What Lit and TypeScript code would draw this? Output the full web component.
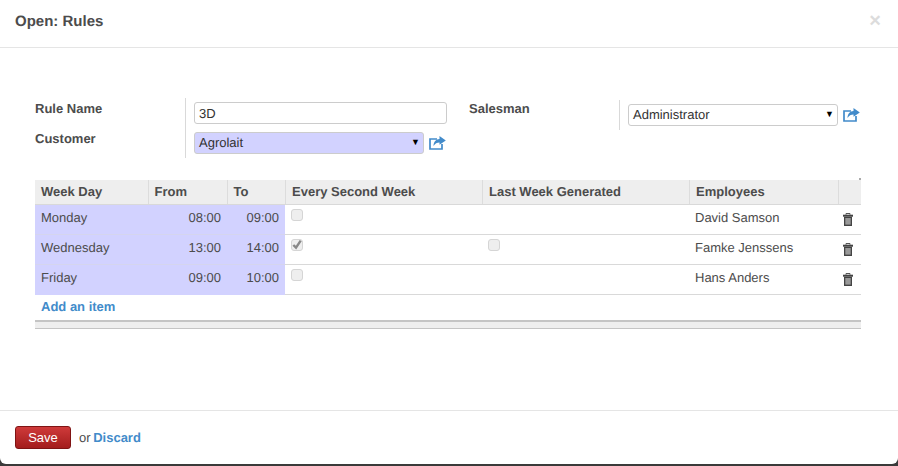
import { LitElement, html, css, svg } from "lit";
import { customElement } from "lit/decorators.js";
import { classMap } from "lit/directives/class-map.js";

const rows = [
  { day: "Monday", from: "08:00", to: "09:00", second: false, generated: false, employee: "David Samson" },
  { day: "Wednesday", from: "13:00", to: "14:00", second: true, generated: true, employee: "Famke Jenssens" },
  { day: "Friday", from: "09:00", to: "10:00", second: false, generated: false, employee: "Hans Anders" },
];

const externalIcon = svg`<svg class="ext" width="17" height="14" viewBox="0 0 17 14">
  <path d="M8 3H1V13H13V8" fill="none" stroke="#428bca" stroke-width="1.7"/>
  <path d="M10.5 0L16.8 4.4L10.5 8.8V6.4C8 6.4 6 7.4 4.5 10C4.5 6 7 3 10.5 3Z" fill="#428bca"/>
</svg>`;

const trashIcon = svg`<svg width="10" height="13" viewBox="0 0 10 13">
  <path d="M3 1.7V0.5H7V1.7" fill="none" stroke="#555" stroke-width="1"/>
  <rect x="0" y="1.7" width="10" height="2" fill="#444"/>
  <rect x="1" y="3.7" width="8" height="9.3" fill="#444"/>
  <rect x="2.3" y="5" width="5.4" height="6.6" fill="#999"/>
</svg>`;

@customElement("app-root")
export class AppRoot extends LitElement {
  static override styles = css`
    :host {
      display: block;
      height: 466px;
      background: #3a3a3a;
      font-family: "Liberation Sans", Arial, sans-serif;
      font-size: 13px;
      color: #4c4c4c;
      text-rendering: geometricPrecision;
    }
    .modal {
      height: 464px;
      background: #fff;
      border-radius: 0 0 6px 6px;
      display: flex;
      flex-direction: column;
      overflow: hidden;
    }
    .head {
      height: 47px;
      border-bottom: 1px solid #e5e5e5;
      display: flex;
      align-items: center;
      justify-content: space-between;
      padding: 0 15px;
    }
    .head h3 {
      margin: 0;
      font-size: 15px;
      font-weight: bold;
      position: relative;
      top: -2px;
    }
    .close {
      color: #dcdcdc;
      font-size: 20px;
      font-weight: bold;
      line-height: 20px;
      position: relative;
      top: -3px;
      left: -2px;
    }
    .body {
      flex: 1;
      padding: 50px 37px 0 35px;
    }
    .form {
      display: grid;
      grid-template-columns: 150px 284px 150px 1fr;
      align-items: start;
      width: 826px;
      height: 60px;
    }
    .labels {
      display: flex;
      flex-direction: column;
      font-weight: bold;
      padding-top: 3px;
      gap: 15px;
    }
    .labels span {
      height: 15px;
      line-height: 15px;
    }
    .fields {
      box-sizing: border-box;
      height: 60px;
      border-left: 1px solid #d9d9d9;
      padding: 4px 0 0 8px;
      display: flex;
      flex-direction: column;
      gap: 8px;
    }
    .fields.short {
      height: 30px;
      margin-top: 2px;
      padding-top: 4px;
    }
    .input,
    .select {
      box-sizing: border-box;
      height: 22px;
      border: 1px solid #ccc;
      border-radius: 3px;
      padding-left: 4px;
      color: #333;
      background: #fff;
    }
    .input {
      width: 253px;
      line-height: 21px;
    }
    .combo {
      display: flex;
      align-items: center;
      gap: 4px;
    }
    .select {
      display: flex;
      justify-content: space-between;
      line-height: 19px;
      padding-right: 3px;
    }
    .select.required {
      width: 230px;
      background: #d2d2ff;
    }
    .select.plain {
      width: 210px;
    }
    .caret {
      font-size: 9px;
      color: #000;
    }
    .ext {
      flex: none;
      margin-left: 1px;
    }
    .wrap {
      position: relative;
      margin-top: 22px;
      width: 826px;
    }
    .dot {
      position: absolute;
      top: -2px;
      right: 0;
      width: 2px;
      height: 2px;
      background: #aaa;
    }
    table {
      border-collapse: collapse;
      table-layout: fixed;
      width: 826px;
    }
    th {
      box-sizing: border-box;
      height: 24px;
      background: #eee;
      text-align: left;
      font-weight: bold;
      padding: 0 6px;
      border-bottom: 1px solid #d9d9d9;
      border-left: 1px solid #dcdcdc;
    }
    th:first-child {
      border-left: 0;
    }
    th.wide {
      padding-left: 6.5px;
    }
    td {
      box-sizing: border-box;
      height: 30px;
      padding: 5px 6px 0;
      vertical-align: top;
      border-bottom: 1px solid #d9d9d9;
      line-height: 16px;
    }
    td.req {
      background: #d2d2ff;
      border-bottom-color: #d5d5ee;
    }
    tr:last-child td.req {
      border-bottom-color: #d2d2ff;
    }
    td.num {
      text-align: right;
    }
    td.trash {
      padding: 8px 0 0 5px;
    }
    .check {
      display: block;
      box-sizing: border-box;
      width: 12px;
      height: 12px;
      margin-top: -1px;
      border: 1px solid #d5d5d5;
      border-radius: 3px;
      background: #eee;
    }
    .check svg {
      display: block;
    }
    .hidden {
      visibility: hidden;
    }
    .add {
      height: 25px;
      padding: 4px 6px 0;
      box-sizing: border-box;
      font-weight: bold;
    }
    a {
      color: #428bca;
      font-weight: bold;
      text-decoration: none;
    }
    .foot {
      box-sizing: border-box;
      height: 9px;
      background: #eee;
      border-top: 2px solid #c4c4c4;
      border-bottom: 1px solid #c4c4c4;
    }
    .actions {
      height: 53px;
      border-top: 1px solid #e5e5e5;
      display: flex;
      align-items: center;
      padding: 0 15px;
      gap: 7px;
    }
    .save {
      box-sizing: border-box;
      width: 56px;
      height: 23px;
      padding: 0;
      margin-right: 1px;
      border: 1px solid #7f1414;
      border-radius: 3px;
      background: linear-gradient(#cf3a3a, #a31d1d);
      color: #fff;
      font-family: inherit;
      font-size: 13px;
    }
    .actions a {
      margin-left: -1px;
    }
  `;

  private renderCheck(checked: boolean, hidden = false) {
    return html`<span class=${classMap({ check: true, hidden })}>
      ${checked
        ? svg`<svg width="10" height="10" viewBox="0 0 10 10"><path d="M1.3 5L4 7.7L8.7 0.7" fill="none" stroke="#888" stroke-width="2.4"/></svg>`
        : ""}
    </span>`;
  }

  override render() {
    return html`<div class="modal">
      <div class="head">
        <h3>Open: Rules</h3>
        <span class="close">×</span>
      </div>
      <div class="body">
        <div class="form">
          <div class="labels"><span>Rule Name</span><span>Customer</span></div>
          <div class="fields">
            <div class="input">3D</div>
            <div class="combo">
              <div class="select required"><span>Agrolait</span><span class="caret">▼</span></div>
              ${externalIcon}
            </div>
          </div>
          <div class="labels"><span>Salesman</span></div>
          <div class="fields short">
            <div class="combo">
              <div class="select plain"><span>Administrator</span><span class="caret">▼</span></div>
              ${externalIcon}
            </div>
          </div>
        </div>
        <div class="wrap">
          <span class="dot"></span>
          <table>
            <colgroup>
              <col style="width:113px" />
              <col style="width:79px" />
              <col style="width:58px" />
              <col style="width:197px" />
              <col style="width:207px" />
              <col style="width:149px" />
              <col style="width:23px" />
            </colgroup>
            <thead>
              <tr>
                <th>Week Day</th>
                <th>From</th>
                <th>To</th>
                <th class="wide">Every Second Week</th>
                <th class="wide">Last Week Generated</th>
                <th class="wide">Employees</th>
                <th></th>
              </tr>
            </thead>
            <tbody>
              ${rows.map(
                (r) => html`<tr>
                  <td class="req">${r.day}</td>
                  <td class="req num">${r.from}</td>
                  <td class="req num">${r.to}</td>
                  <td>${this.renderCheck(r.second)}</td>
                  <td>${this.renderCheck(false, !r.generated)}</td>
                  <td>${r.employee}</td>
                  <td class="trash">${trashIcon}</td>
                </tr>`
              )}
            </tbody>
          </table>
          <div class="add"><a href="#">Add an item</a></div>
          <div class="foot"></div>
        </div>
      </div>
      <div class="actions">
        <button class="save">Save</button>
        <span>or <a href="#">Discard</a></span>
      </div>
    </div>`;
  }
}
